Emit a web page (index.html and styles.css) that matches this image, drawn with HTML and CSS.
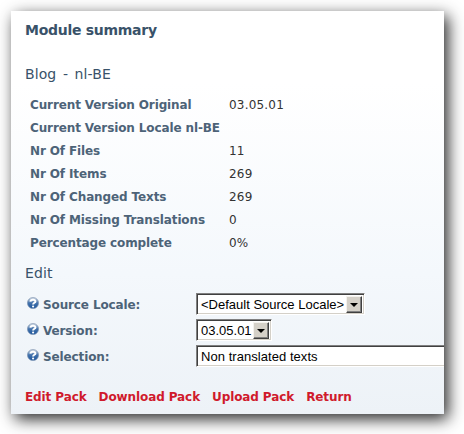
FILE: index.html
```html
<!DOCTYPE html>
<html lang="en">
<head>
  <meta charset="UTF-8" />
  <meta name="viewport" content="width=device-width, initial-scale=1.0"/>
  <title>Module summary</title>
  <link rel="stylesheet" href="styles.css">
</head>
<body>

<!-- Shared help icon -->
<svg class="defs" width="0" height="0">
  <defs>
    <linearGradient id="ball" x1="0" y1="0" x2="0" y2="1">
      <stop offset="0" stop-color="#d5dce5"/>
      <stop offset="0.5" stop-color="#4272ac"/>
      <stop offset="1" stop-color="#1d559c"/>
    </linearGradient>
    <symbol id="help" viewBox="0 0 12 12">
      <circle cx="6" cy="6" r="5.6" fill="url(#ball)" stroke="#7d94b0" stroke-width="0.6"/>
      <path d="M3.4 4.6C3.7 2.2 8.4 2.1 8.4 4.4C8.4 5.8 6.1 5.8 6.1 7.5" fill="none" stroke="#fff" stroke-width="2"/>
      <circle cx="6.1" cy="9.5" r="1.1" fill="#fff"/>
    </symbol>
  </defs>
</svg>

<div class="panel">
  <h1>Module summary</h1>

  <h2>Blog - nl-BE</h2>
  <dl class="summary">
    <dt>Current Version Original</dt><dd>03.05.01</dd>
    <dt>Current Version Locale nl-BE</dt><dd></dd>
    <dt>Nr Of Files</dt><dd>11</dd>
    <dt>Nr Of Items</dt><dd>269</dd>
    <dt>Nr Of Changed Texts</dt><dd>269</dd>
    <dt>Nr Of Missing Translations</dt><dd>0</dd>
    <dt>Percentage complete</dt><dd>0%</dd>
  </dl>

  <h2 class="edit">Edit</h2>
  <form>
    <div class="row">
      <svg class="help"><use href="#help"/></svg>
      <label>Source Locale:</label>
      <div class="select locale"><span>&lt;Default Source Locale&gt;</span><i class="arrow"></i></div>
    </div>
    <div class="row">
      <svg class="help"><use href="#help"/></svg>
      <label>Version:</label>
      <div class="select version"><span>03.05.01</span><i class="arrow"></i></div>
    </div>
    <div class="row">
      <svg class="help"><use href="#help"/></svg>
      <label>Selection:</label>
      <div class="select selection"><span>Non translated texts</span><i class="arrow"></i></div>
    </div>
  </form>

  <nav>
    <a href="#">Edit Pack</a>
    <a href="#">Download Pack</a>
    <a href="#">Upload Pack</a>
    <a href="#">Return</a>
  </nav>
</div>

</body>
</html>
```
FILE: styles.css
```css
* {
  box-sizing: border-box;
  margin: 0;
  padding: 0;
}

body {
  background: #fff;
  height: 434px;
  padding: 11px;
  overflow: hidden;
  font-family: Tahoma, Verdana, "DejaVu Sans", sans-serif;
  font-size: 12px;
  color: #333;
}

.defs {
  display: block;
}

.panel {
  width: 433px;
  height: 403px;
  padding: 9px 0 0 14px;
  overflow: hidden;
  background: linear-gradient(#fff 0, #fff 18%, #f4f8fc 65%, #edf2f7 100%);
  box-shadow: 4px 5px 15px rgba(0, 0, 0, 0.85);
}

h1 {
  height: 20px;
  line-height: 20px;
  font-size: 14px;
  letter-spacing: -0.28px;
  color: #395269;
}

h2 {
  height: 20px;
  margin-top: 24px;
  line-height: 20px;
  font-size: 14px;
  font-weight: normal;
  letter-spacing: 0.1px;
  word-spacing: 2px;
  color: #395269;
}

h2.edit {
  margin-top: 8px;
}

.summary {
  display: grid;
  grid-template-columns: 199px 1fr;
  grid-auto-rows: 23px;
  padding: 10px 0 0 5px;
  line-height: 23px;
}

dt,
label {
  font-weight: bold;
  color: #4d6378;
  letter-spacing: -0.12px;
  white-space: nowrap;
}

dd {
  letter-spacing: 0.2px;
}

form {
  padding-top: 10px;
}

.row {
  display: flex;
  align-items: center;
  height: 22px;
  margin-bottom: 4px;
}

.help {
  flex: none;
  width: 12px;
  height: 12px;
  margin: 0 4px 2px 2px;
}

label {
  flex: none;
  width: 153px;
  padding-top: 1px;
}

.select {
  display: flex;
  flex: none;
  justify-content: space-between;
  height: 22px;
  border: 1px solid;
  border-color: #808080 #fff #fff #808080;
  box-shadow: inset 1px 1px #404040, inset -1px -1px #d4d0c8;
  background: #fff;
  padding: 2px;
  font: 13px/18px "Liberation Sans", Arial, sans-serif;
  color: #000;
  white-space: nowrap;
}

.select span {
  padding-left: 2px;
}

.locale {
  width: 169px;
}

.version {
  width: 76px;
}

.selection {
  width: 300px;
  letter-spacing: 0.05px;
}

.arrow {
  display: flex;
  align-items: center;
  justify-content: center;
  width: 16px;
  height: 17px;
  background: #d4d0c8;
  border: 1px solid;
  border-color: #f4f2ee #404040 #404040 #f4f2ee;
  box-shadow: inset -1px -1px #808080;
}

.arrow::before {
  content: "";
  border: 4px solid transparent;
  border-top-color: #000;
  border-bottom: 0;
}

nav {
  display: flex;
  gap: 12px;
  margin-top: 20px;
  line-height: 20px;
}

nav a {
  color: #d01a2c;
  font-weight: bold;
  letter-spacing: -0.1px;
  text-decoration: none;
  white-space: nowrap;
}
```
